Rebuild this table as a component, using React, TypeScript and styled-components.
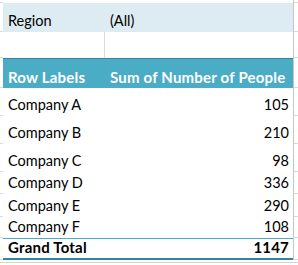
import * as React from "react";
import styled, { createGlobalStyle } from "styled-components";

const GlobalStyle = createGlobalStyle`
  html, body {
    margin: 0;
    padding: 0;
    background: #ffffff;
  }
  body {
    font-family: Lato, "Liberation Sans", Arial, sans-serif;
    font-size: 14.5px;
    color: #000000;
  }
`;

const Sheet = styled.div`
  width: 298px;
  height: 265px;
  overflow: hidden;
  display: flex;
  flex-direction: column;
`;

type RowKind = "filter" | "blank" | "header" | "data" | "total" | "spacer";

const Row = styled.div<{ $h: number }>`
  display: grid;
  grid-template-columns: 3px 102px 188px 1px 4px;
  height: ${(p) => p.$h}px;
  flex: none;
`;

const Gutter = styled.div<{ $line?: boolean }>`
  border-bottom: ${(p) => (p.$line ? "1px solid #d9d9d9" : "none")};
`;

const Edge = styled.div`
  background: #c6c6c6;
`;

const Rule = styled.div`
  flex: none;
  height: 1px;
  margin-top: 2px;
  background: #d4d4d4;
`;

const Cell = styled.div<{ $kind: RowKind; $right?: boolean; $divider?: boolean }>`
  display: flex;
  align-items: flex-end;
  justify-content: ${(p) => (p.$right ? "flex-end" : "flex-start")};
  padding: 0 4px 3px 5px;
  line-height: 16px;
  white-space: nowrap;
  background: ${(p) =>
    p.$kind === "filter" ? "#ddebf2" : p.$kind === "header" ? "#4bacc6" : "#ffffff"};
  color: ${(p) => (p.$kind === "header" ? "#ffffff" : "#000000")};
  font-size: ${(p) => (p.$kind === "header" || p.$kind === "total" ? "15px" : "inherit")};
  font-weight: ${(p) => (p.$kind === "header" || p.$kind === "total" ? 700 : 400)};
  letter-spacing: ${(p) => (p.$kind === "header" || p.$kind === "total" ? "0.2px" : "0")};
  border-top: ${(p) =>
    p.$kind === "header"
      ? "1px solid #31869b"
      : p.$kind === "total"
      ? "1px solid #4bacc6"
      : "none"};
  border-bottom: ${(p) => (p.$kind === "total" ? "2px solid #31869b" : "none")};
  border-right: ${(p) => (p.$divider ? "1px solid #d9d9d9" : "none")};
`;

const rows = [
  { label: "Company A", value: 105, h: 28 },
  { label: "Company B", value: 210, h: 28 },
  { label: "Company C", value: 98, h: 28 },
  { label: "Company D", value: 336, h: 22 },
  { label: "Company E", value: 290, h: 23 },
  { label: "Company F", value: 108, h: 21 },
];

const total = rows.reduce((s, r) => s + r.value, 0);

const App = () => (
  <Sheet>
    <GlobalStyle />
    <Row $h={3}>
      <Gutter $line />
      <Cell $kind="blank" />
      <Cell $kind="blank" />
      <Edge />
      <Gutter $line />
    </Row>
    <Row $h={29}>
      <Gutter $line />
      <Cell $kind="filter">Region</Cell>
      <Cell $kind="filter">(All)</Cell>
      <Edge />
      <Gutter $line />
    </Row>
    <Row $h={26}>
      <Gutter $line />
      <Cell $kind="blank" $divider />
      <Cell $kind="blank" />
      <Edge />
      <Gutter $line />
    </Row>
    <Row $h={30}>
      <Gutter $line />
      <Cell $kind="header">Row Labels</Cell>
      <Cell $kind="header">Sum of Number of People</Cell>
      <Edge />
      <Gutter $line />
    </Row>
    {rows.map((r) => (
      <Row key={r.label} $h={r.h}>
        <Gutter $line />
        <Cell $kind="data">{r.label}</Cell>
        <Cell $kind="data" $right>
          {r.value}
        </Cell>
        <Edge />
        <Gutter $line />
      </Row>
    ))}
    <Row $h={22}>
      <Gutter $line />
      <Cell $kind="total">Grand Total</Cell>
      <Cell $kind="total" $right>
        {total}
      </Cell>
      <Edge />
      <Gutter $line />
    </Row>
    <Rule />
  </Sheet>
);

export default App;
